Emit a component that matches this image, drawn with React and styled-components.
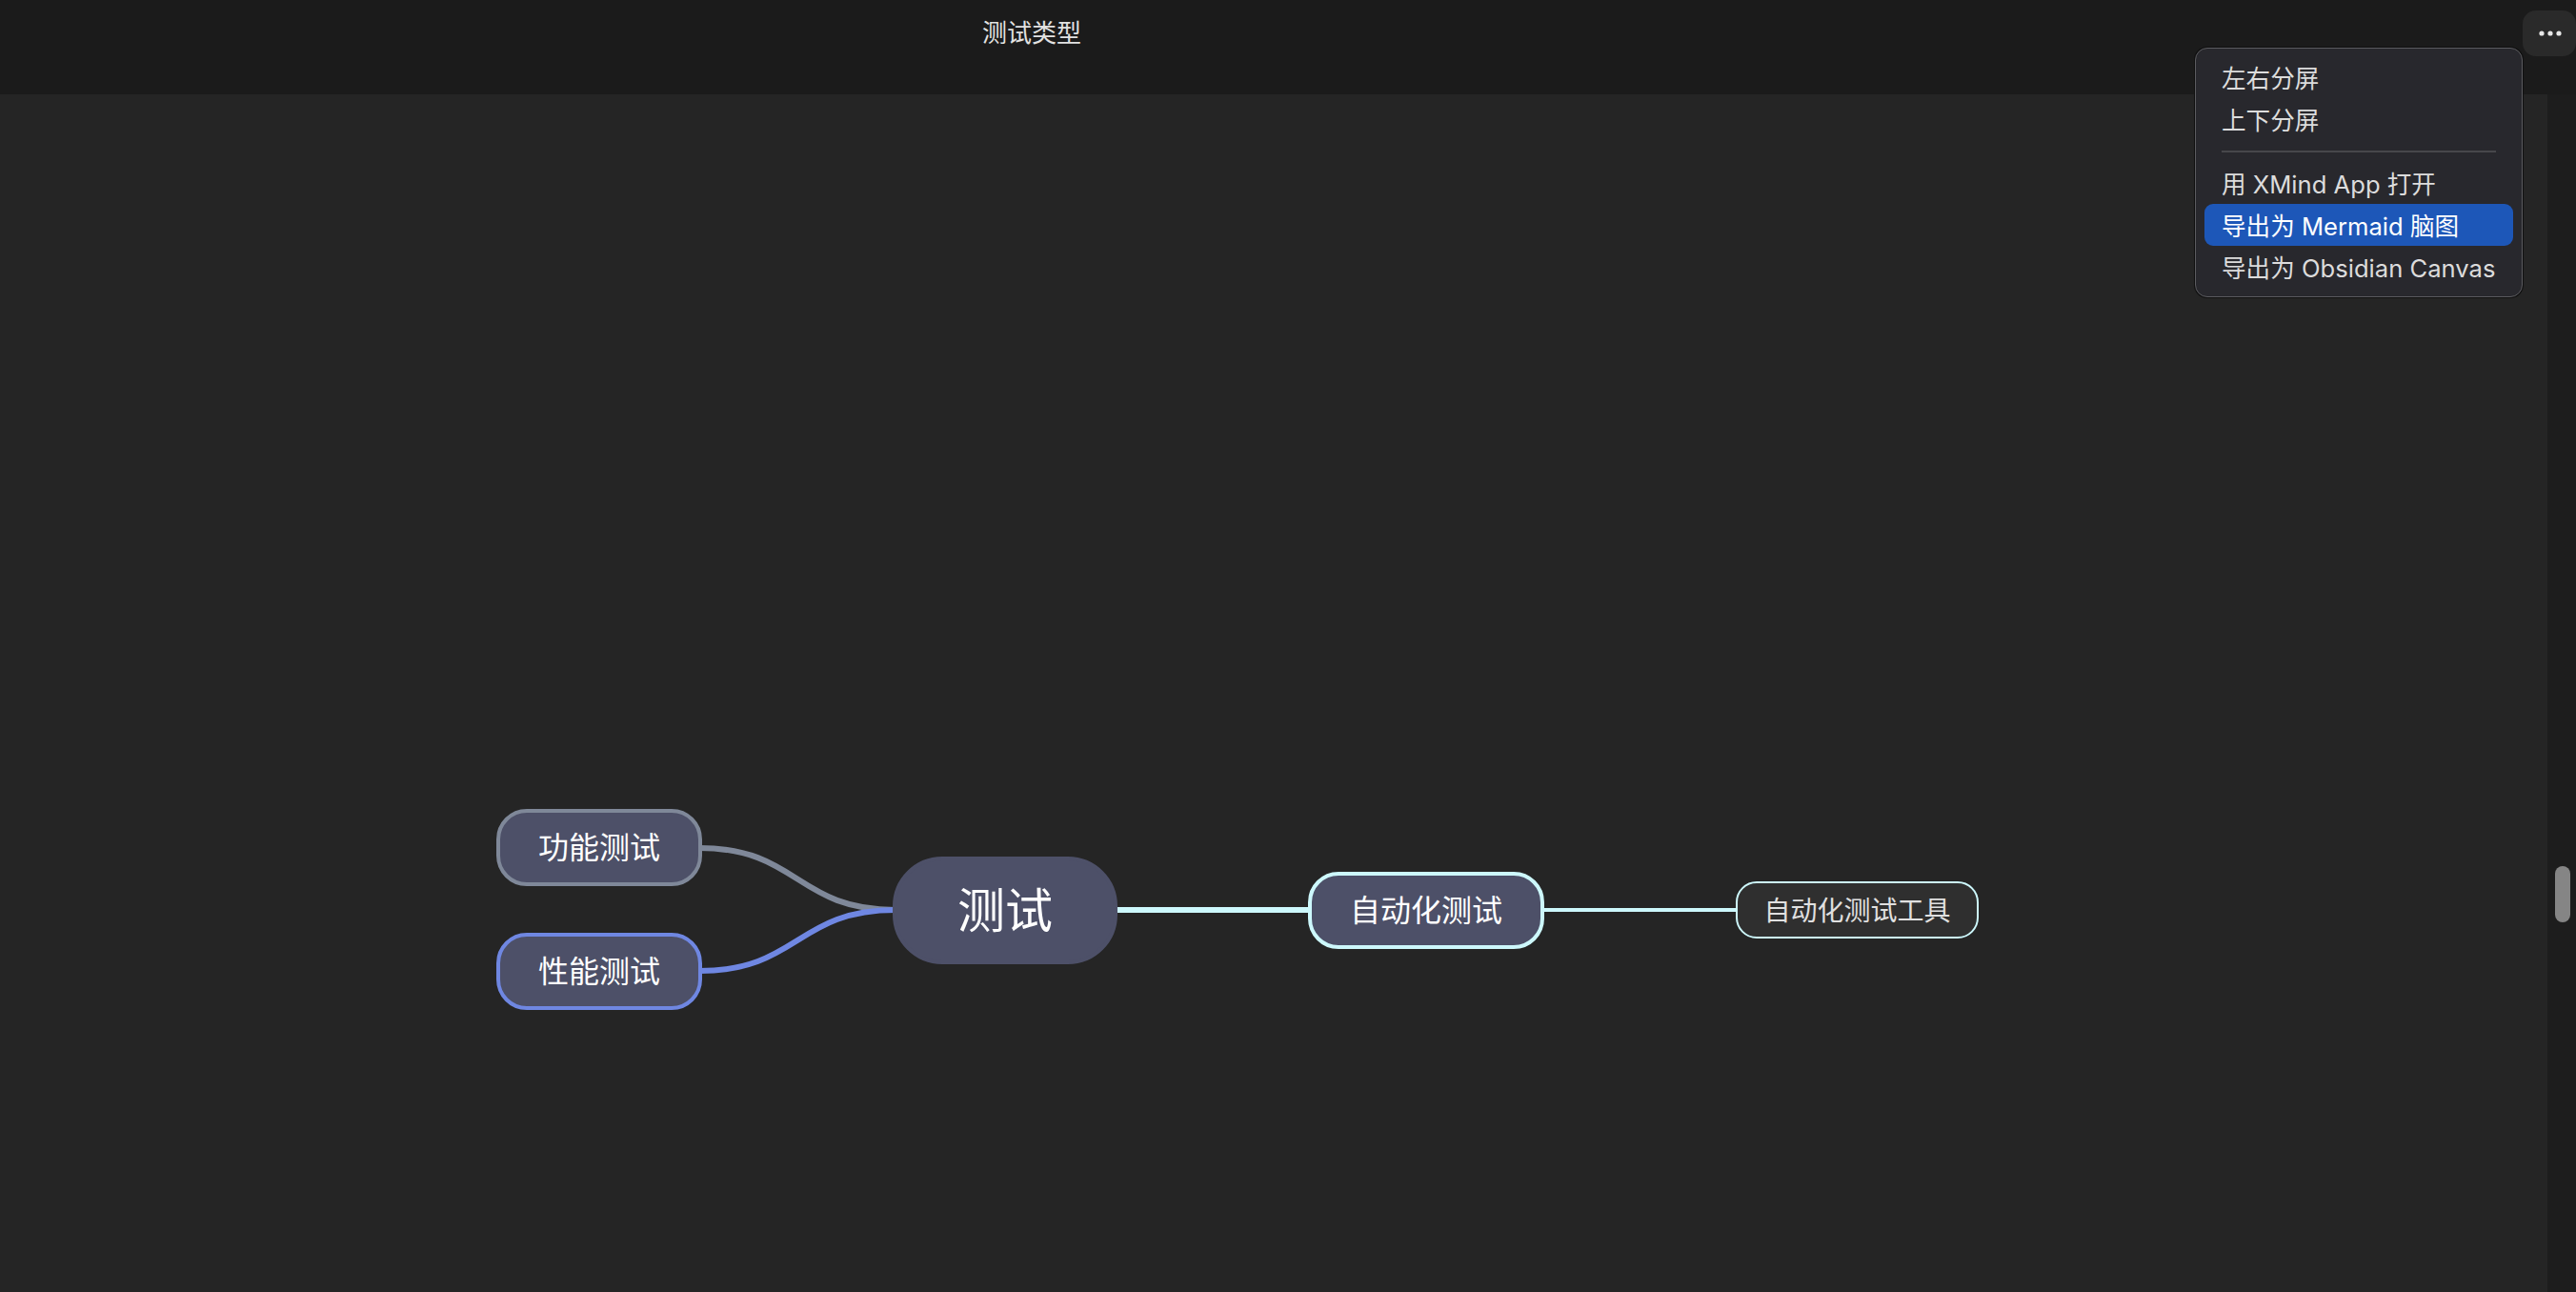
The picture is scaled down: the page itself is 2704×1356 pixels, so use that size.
import React from "react";
import styled, { createGlobalStyle } from "styled-components";

const nodes = [
  { id: "func", label: "功能测试", x: 521, y: 849, width: 216, height: 81, kind: "branch", color: "#7f8899" },
  { id: "perf", label: "性能测试", x: 521, y: 979, width: 216, height: 81, kind: "branch", color: "#6f87e2" },
  { id: "root", label: "测试", x: 937, y: 899, width: 236, height: 113, kind: "root", color: "#4d5068" },
  { id: "auto", label: "自动化测试", x: 1373, y: 915, width: 248, height: 81, kind: "branch", color: "#cdf8fc" },
  { id: "tool", label: "自动化测试工具", x: 1822, y: 925, width: 255, height: 60, kind: "leaf", color: "#cdf8fc" },
];

const menuTop = ["左右分屏", "上下分屏"];
const menuBottom = [
  { label: "用 XMind App 打开" },
  { label: "导出为 Mermaid 脑图", active: true },
  { label: "导出为 Obsidian Canvas" },
];

export default function App() {
  return (
    <>
      <GlobalStyle />
      <Page>
        <Header>
          <Title>测试类型</Title>
          <MoreButton aria-label="more">
            <svg width="28" height="8" viewBox="0 0 28 8" fill="#e8e8e8">
              <circle cx="5" cy="4" r="2.6" />
              <circle cx="14" cy="4" r="2.6" />
              <circle cx="23" cy="4" r="2.6" />
            </svg>
          </MoreButton>
        </Header>
        <Body>
          <Canvas>
            {/* connectors are in page coordinates, so the viewBox starts under the header */}
            <Wires viewBox="0 99 2674 1257" fill="none">
              <path d="M734 890 C838 890 836 955 940 955" stroke="#7f8899" strokeWidth="6" />
              <path d="M734 1019 C838 1019 836 955 940 955" stroke="#6f87e2" strokeWidth="6" />
              <path d="M1171 955 H1375" stroke="#cdf8fc" strokeWidth="6" />
              <path d="M1618 955 H1824" stroke="#cdf8fc" strokeWidth="4" />
            </Wires>
            {nodes.map((n) => (
              <Node
                key={n.id}
                $kind={n.kind}
                $color={n.color}
                $x={n.x}
                $y={n.y - 99}
                $width={n.width}
                $height={n.height}
              >
                {n.label}
              </Node>
            ))}
          </Canvas>
          <ScrollTrack>
            <ScrollThumb />
          </ScrollTrack>
        </Body>
        <Menu>
          {menuTop.map((label) => (
            <MenuItem key={label}>{label}</MenuItem>
          ))}
          <MenuDivider />
          {menuBottom.map((item) => (
            <MenuItem key={item.label} $active={item.active} $mixed>
              {item.label}
            </MenuItem>
          ))}
        </Menu>
      </Page>
    </>
  );
}

const GlobalStyle = createGlobalStyle`
  html, body {
    margin: 0;
    padding: 0;
    background: #252525;
    overflow: hidden;
  }
`;

const Page = styled.div`
  position: relative;
  display: flex;
  flex-direction: column;
  width: 2704px;
  height: 1356px;
  overflow: hidden;
  font-family: Inter, "Noto Sans CJK SC", sans-serif;
`;

const Header = styled.header`
  display: flex;
  align-items: flex-start;
  flex: 0 0 99px;
  background: #1b1b1b;
`;

const Title = styled.div`
  margin: 17px 0 0 1031px;
  font-size: 26px;
  line-height: 36px;
  color: #e2e2e2;
`;

const MoreButton = styled.button`
  display: flex;
  align-items: center;
  justify-content: center;
  width: 56px;
  height: 48px;
  margin: 11px 0 0 auto;
  padding: 0 0 0 2px;
  border: none;
  border-radius: 14px;
  background: #2a2a2a;
`;

const Body = styled.main`
  display: flex;
  flex: 1;
`;

const Canvas = styled.div`
  position: relative;
  flex: 1;
  background: #252525;
`;

const Wires = styled.svg`
  position: absolute;
  inset: 0;
  width: 100%;
  height: 100%;
`;

const Node = styled.div`
  position: absolute;
  left: ${(p) => p.$x}px;
  top: ${(p) => p.$y}px;
  width: ${(p) => p.$width}px;
  height: ${(p) => p.$height}px;
  box-sizing: border-box;
  display: flex;
  align-items: center;
  justify-content: center;
  padding-bottom: ${(p) => (p.$kind === "root" ? 7 : p.$kind === "leaf" ? 2 : 6)}px;
  border: ${(p) => (p.$kind === "leaf" ? 2 : 4)}px solid ${(p) => p.$color};
  border-radius: ${(p) => (p.$kind === "root" ? 52 : p.$kind === "leaf" ? 22 : 32)}px;
  background: ${(p) => (p.$kind === "leaf" ? "#2f2f2f" : "#4d5068")};
  color: ${(p) => (p.$kind === "leaf" ? "#e0e0e0" : "#ffffff")};
  font-size: ${(p) => (p.$kind === "root" ? 50 : p.$kind === "leaf" ? 28 : 32)}px;
  white-space: nowrap;
`;

const ScrollTrack = styled.div`
  flex: 0 0 30px;
  box-sizing: border-box;
  padding: 810px 6px 0 8px;
  background: #1d1d1d;
`;

const ScrollThumb = styled.div`
  height: 59px;
  border-radius: 8px;
  background: #858585;
`;

const Menu = styled.nav`
  position: absolute;
  top: 50px;
  left: 2304px;
  width: 344px;
  height: 262px;
  box-sizing: border-box;
  padding: 10px 9px;
  border: 1px solid #5c5c60;
  border-radius: 13px;
  background: #28282d;
  box-shadow: 0 0 0 1px #0f0f0f;
`;

const MenuItem = styled.div`
  height: 44px;
  padding-left: 18px;
  border-radius: 9px;
  background: ${(p) => (p.$active ? "#1d57b8" : "transparent")};
  color: ${(p) => (p.$active ? "#ffffff" : "#dcdcdc")};
  font-size: 25.6px;
  line-height: ${(p) => (p.$mixed ? 47 : 44)}px;
  white-space: nowrap;
`;

const MenuDivider = styled.div`
  height: 2px;
  margin: 9px 18px 10px 18px;
  background: #47474b;
`;
